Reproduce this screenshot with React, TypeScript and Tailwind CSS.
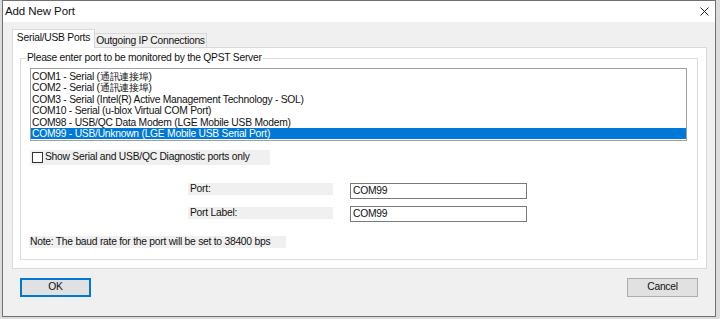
import React from "react";

const font = { fontFamily: '"Liberation Sans", Arial, sans-serif' };

const items = [
  "COM1 - Serial (通訊連接埠)",
  "COM2 - Serial (通訊連接埠)",
  "COM3 - Serial (Intel(R) Active Management Technology - SOL)",
  "COM10 - Serial (u-blox Virtual COM Port)",
  "COM98 - USB/QC Data Modem (LGE Mobile USB Modem)",
  "COM99 - USB/Unknown (LGE Mobile USB Serial Port)",
];

export default function App() {
  return (
    <div
      className="w-[720px] h-[319px] bg-[#dcdcdc] flex pl-[2px] overflow-hidden text-[#111] text-[10.3px] tracking-[-0.25px]"
      style={font}
    >
      <div className="w-[714px] h-[317px] border border-[#707070] bg-[#f0f0f0] flex flex-col">
        {/* Title bar */}
        <div className="h-[21px] bg-white flex items-center justify-between shrink-0">
          <span className="pl-[2px] text-[11.5px] tracking-[-0.1px] leading-none">Add New Port</span>
          <svg width="9" height="9" viewBox="0 0 9 9" className="mr-[6px]">
            <path d="M0.5 0.5 L8.5 8.5 M8.5 0.5 L0.5 8.5" stroke="#222" strokeWidth="1" />
          </svg>
        </div>

        {/* Tabs */}
        <div className="flex items-end ml-[9px] mt-[7px] h-[19px] shrink-0">
          <div className="relative z-10 w-[83px] h-[19px] bg-white border border-[#d9d9d9] border-b-0 flex items-center justify-center leading-none pb-[2px] whitespace-nowrap">
            Serial/USB Ports
          </div>
          <div className="w-[112px] h-[15px] bg-[#f0f0f0] border border-[#d9d9d9] border-l-0 border-b-0 flex items-center justify-center leading-none whitespace-nowrap">
            Outgoing IP Connections
          </div>
        </div>

        {/* Tab panel */}
        <div className="ml-[9px] w-[695px] h-[222px] -mt-px bg-white border border-[#d9d9d9] flex flex-col shrink-0">
          <fieldset className="ml-[7px] mt-[4px] w-[678px] h-[208px] border border-[#dcdcdc] flex flex-col">
            <legend className="ml-[5px] px-[1px] leading-[12px] whitespace-nowrap">
              Please enter port to be monitored by the QPST Server
            </legend>

            {/* List box */}
            <div className="ml-[9px] mt-[4px] w-[657px] h-[73px] border border-[#a0a0a0] bg-white flex flex-col pt-[2px] shrink-0">
              {items.map((t, i) => (
                <div
                  key={t}
                  className={
                    "h-[11.4px] pl-[1px] leading-[11.4px] whitespace-nowrap " +
                    (i === 5 ? "bg-[#0078d7] text-white" : "text-[#111]")
                  }
                >
                  {t}
                </div>
              ))}
            </div>

            {/* Checkbox */}
            <div className="ml-[9px] mt-[9px] w-[240px] h-[15px] bg-[#f0f0f0] flex items-center shrink-0">
              <div className="ml-[2px] w-[11px] h-[11px] border border-[#333] bg-white shrink-0" />
              <span className="ml-[2px] leading-none whitespace-nowrap">
                Show Serial and USB/QC Diagnostic ports only
              </span>
            </div>

            {/* Port */}
            <div className="ml-[167px] mt-[18px] flex items-start shrink-0">
              <div className="w-[145px] h-[12px] bg-[#f0f0f0] leading-[12px] pl-[2px]">Port:</div>
              <div className="ml-[17px] w-[177px] h-[16px] border border-[#7a7a7a] bg-white leading-[14px] pl-[2px]">
                COM99
              </div>
            </div>

            {/* Port Label */}
            <div className="ml-[167px] mt-[7px] flex items-start shrink-0">
              <div className="mt-[1px] w-[145px] h-[12px] bg-[#f0f0f0] leading-[12px] pl-[2px]">Port Label:</div>
              <div className="ml-[17px] w-[177px] h-[16px] border border-[#7a7a7a] bg-white leading-[14px] pl-[2px]">
                COM99
              </div>
            </div>

            {/* Note */}
            <div className="ml-[8px] mt-[14px] w-[257px] h-[12px] bg-[#f0f0f0] leading-[12px] pl-[1px] whitespace-nowrap shrink-0">
              Note: The baud rate for the port will be set to 38400 bps
            </div>
          </fieldset>
        </div>

        {/* Buttons */}
        <div className="mt-[9px] flex justify-between px-[17px] shrink-0">
          <button className="w-[71px] h-[19px] bg-[#e1e1e1] border-2 border-[#0078d7] leading-none flex items-center justify-center">
            OK
          </button>
          <button className="w-[71px] h-[19px] bg-[#e1e1e1] border border-[#adadad] leading-none flex items-center justify-center">
            Cancel
          </button>
        </div>
      </div>
    </div>
  );
}
